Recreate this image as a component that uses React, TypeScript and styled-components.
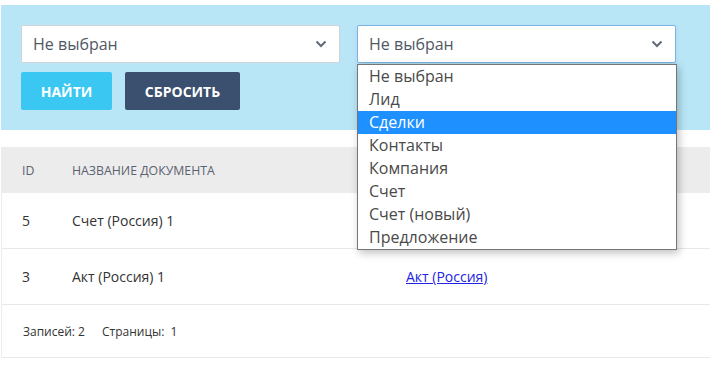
import React from 'react';
import styled, { createGlobalStyle } from 'styled-components';

const GlobalStyle = createGlobalStyle`
  html, body {
    margin: 0;
    padding: 0;
    background: #ffffff;
    font-family: 'Open Sans', 'Noto Sans', sans-serif;
  }
`;

const Page = styled.div`
  padding: 5px 0 0 1px;
  width: 709px;
`;

const FilterPanel = styled.div`
  background: #b9e6f7;
  padding: 20px;
  display: flex;
  flex-direction: column;
  gap: 9px;
`;

const SelectRow = styled.div`
  display: flex;
  gap: 17px;
`;

const SelectWrap = styled.div`
  position: relative;
  width: 319px;
`;

const SelectBox = styled.div<{ $focused?: boolean }>`
  box-sizing: border-box;
  height: 38px;
  background: #fff;
  border: 1px solid ${p => (p.$focused ? '#7ab3e4' : '#d0d4d8')};
  border-radius: 2px;
  display: flex;
  align-items: center;
  justify-content: space-between;
  padding: 0 12px 0 11px;
  font-size: 16px;
  color: #4f5864;
  box-shadow: ${p => (p.$focused ? '0 2px 4px rgba(0,0,0,0.08)' : 'none')};
`;

const Dropdown = styled.ul`
  position: absolute;
  top: 39px;
  left: 0;
  width: 320px;
  box-sizing: border-box;
  margin: 0;
  padding: 0;
  list-style: none;
  background: #fff;
  border: 1px solid #767676;
  box-shadow: 2px 3px 8px rgba(0, 0, 0, 0.25);
  z-index: 10;
`;

const Option = styled.li<{ $active?: boolean }>`
  height: 23px;
  line-height: 22px;
  padding-left: 11px;
  font-size: 16px;
  color: ${p => (p.$active ? '#ffffff' : '#4a4a4a')};
  background: ${p => (p.$active ? '#1e90ff' : 'transparent')};
`;

const ButtonRow = styled.div`
  display: flex;
  gap: 13px;
`;

const Button = styled.button<{ $variant: 'primary' | 'dark' }>`
  height: 38px;
  width: ${p => (p.$variant === 'primary' ? '91px' : '115px')};
  padding: 0;
  border: none;
  border-radius: 2px;
  font-family: 'Open Sans', sans-serif;
  font-weight: 700;
  font-size: 14px;
  color: #fff;
  background: ${p => (p.$variant === 'primary' ? '#3ac8f3' : '#3b4f6e')};
`;

const Table = styled.div`
  margin-top: 17px;
  border-left: 1px solid #ececec;
  color: #333;
`;

const Row = styled.div<{ $head?: boolean }>`
  display: grid;
  grid-template-columns: 50px 334px 1fr;
  align-items: center;
  height: ${p => (p.$head ? '46px' : '55px')};
  padding-left: 20px;
  background: ${p => (p.$head ? '#ececec' : '#fff')};
  border-bottom: ${p => (p.$head ? 'none' : '1px solid #e8e8e8')};
  font-size: ${p => (p.$head ? '12.3px' : '14px')};
  color: ${p => (p.$head ? '#5a6270' : '#333')};
  text-transform: ${p => (p.$head ? 'uppercase' : 'none')};
`;

const DocLink = styled.a`
  color: #2323e6;
  text-decoration: underline;
`;

const Footer = styled.div`
  height: 52px;
  display: flex;
  align-items: center;
  gap: 17px;
  padding-left: 21px;
  font-size: 12px;
  color: #333;
  border-bottom: 1px solid #e8e8e8;
`;

const Chevron = () => (
  <svg width="12" height="8" viewBox="0 0 12 8">
    <path d="M1.5 1.5 L6 6 L10.5 1.5" fill="none" stroke="#5f6b78" strokeWidth="2" />
  </svg>
);

const options = ['Не выбран', 'Лид', 'Сделки', 'Контакты', 'Компания', 'Счет', 'Счет (новый)', 'Предложение'];

const rows = [
  { id: 5, name: 'Счет (Россия) 1', link: '' },
  { id: 3, name: 'Акт (Россия) 1', link: 'Акт (Россия)' },
];

export default function App() {
  return (
    <Page>
      <GlobalStyle />
      <FilterPanel>
        <SelectRow>
          <SelectWrap>
            <SelectBox>
              Не выбран
              <Chevron />
            </SelectBox>
          </SelectWrap>
          <SelectWrap>
            <SelectBox $focused>
              Не выбран
              <Chevron />
            </SelectBox>
            <Dropdown>
              {options.map(o => (
                <Option key={o} $active={o === 'Сделки'}>{o}</Option>
              ))}
            </Dropdown>
          </SelectWrap>
        </SelectRow>
        <ButtonRow>
          <Button $variant="primary">НАЙТИ</Button>
          <Button $variant="dark">СБРОСИТЬ</Button>
        </ButtonRow>
      </FilterPanel>
      <Table>
        <Row $head>
          <span>ID</span>
          <span>Название документа</span>
          <span />
        </Row>
        {rows.map(r => (
          <Row key={r.id}>
            <span>{r.id}</span>
            <span>{r.name}</span>
            <span>{r.link && <DocLink href="#">{r.link}</DocLink>}</span>
          </Row>
        ))}
        <Footer>
          <span>Записей: 2</span>
          <span>Страницы:&nbsp; 1</span>
        </Footer>
      </Table>
    </Page>
  );
}
